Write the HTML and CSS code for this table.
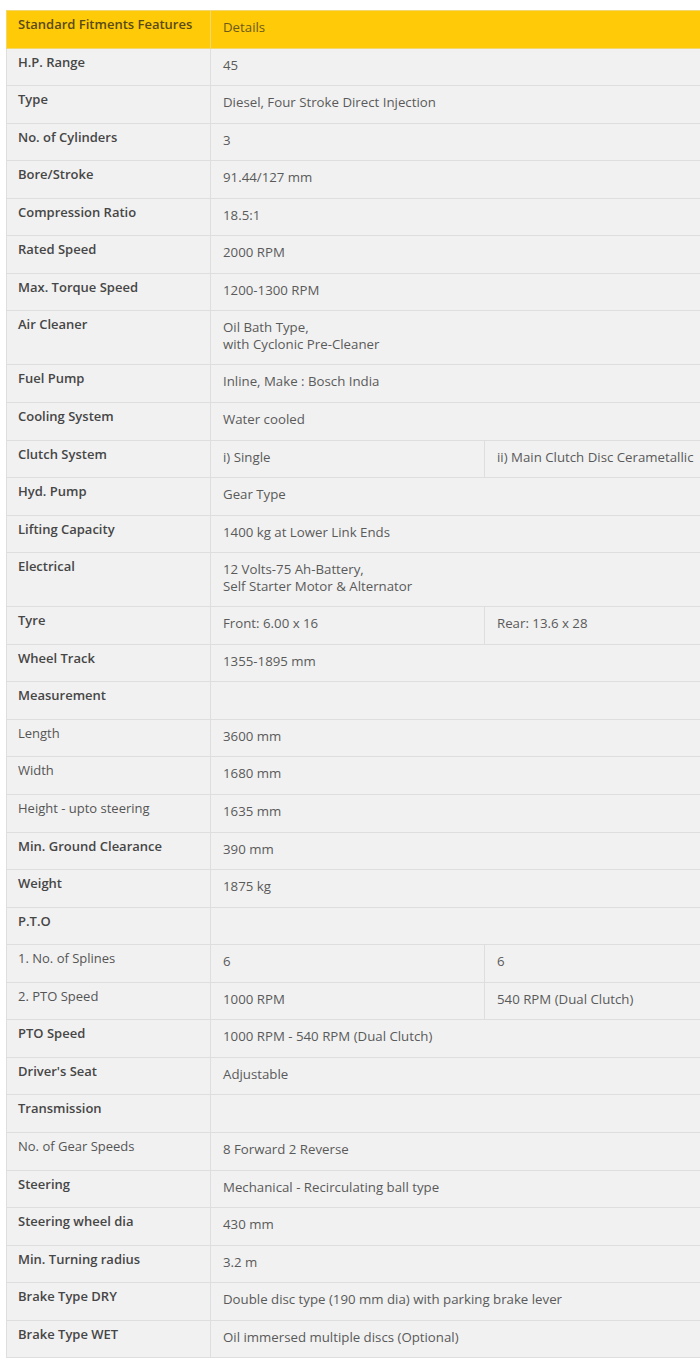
FILE: index.html
```html
<!DOCTYPE html>
<html lang="en">
<head>
  <meta charset="UTF-8" />
  <meta name="viewport" content="width=device-width, initial-scale=1" />
  <title>Specifications</title>
  <link rel="stylesheet" href="styles.css">
</head>
<body>
  <div class="spec-wrap">
    <table class="spec">
      <colgroup>
        <col class="c-label"><col class="c-val"><col class="c-extra">
      </colgroup>
      <thead>
        <tr><th>Standard Fitments Features</th><td colspan="2">Details</td></tr>
      </thead>
      <tbody>
        <tr><th>H.P. Range</th><td colspan="2">45</td></tr>
        <tr><th>Type</th><td colspan="2">Diesel, Four Stroke Direct Injection</td></tr>
        <tr><th>No. of Cylinders</th><td colspan="2">3</td></tr>
        <tr><th>Bore/Stroke</th><td colspan="2">91.44/127 mm</td></tr>
        <tr><th>Compression Ratio</th><td colspan="2">18.5:1</td></tr>
        <tr><th>Rated Speed</th><td colspan="2">2000 RPM</td></tr>
        <tr><th>Max. Torque Speed</th><td colspan="2">1200-1300 RPM</td></tr>
        <tr><th>Air Cleaner</th><td colspan="2">Oil Bath Type,<br>with Cyclonic Pre-Cleaner</td></tr>
        <tr><th>Fuel Pump</th><td colspan="2">Inline, Make : Bosch India</td></tr>
        <tr><th>Cooling System</th><td colspan="2">Water cooled</td></tr>
        <tr><th>Clutch System</th><td>i) Single</td><td>ii) Main Clutch Disc Cerametallic</td></tr>
        <tr><th>Hyd. Pump</th><td colspan="2">Gear Type</td></tr>
        <tr><th>Lifting Capacity</th><td colspan="2">1400 kg at Lower Link Ends</td></tr>
        <tr><th>Electrical</th><td colspan="2">12 Volts-75 Ah-Battery,<br>Self Starter Motor &amp; Alternator</td></tr>
        <tr><th>Tyre</th><td>Front: 6.00 x 16</td><td>Rear: 13.6 x 28</td></tr>
        <tr><th>Wheel Track</th><td colspan="2">1355-1895 mm</td></tr>
        <tr><th>Measurement</th><td colspan="2"></td></tr>
        <tr><th class="sub">Length</th><td colspan="2">3600 mm</td></tr>
        <tr><th class="sub">Width</th><td colspan="2">1680 mm</td></tr>
        <tr><th class="sub">Height - upto steering</th><td colspan="2">1635 mm</td></tr>
        <tr><th>Min. Ground Clearance</th><td colspan="2">390 mm</td></tr>
        <tr><th>Weight</th><td colspan="2">1875 kg</td></tr>
        <tr><th>P.T.O</th><td colspan="2"></td></tr>
        <tr><th class="sub">1. No. of Splines</th><td>6</td><td>6</td></tr>
        <tr><th class="sub">2. PTO Speed</th><td>1000 RPM</td><td>540 RPM (Dual Clutch)</td></tr>
        <tr><th>PTO Speed</th><td colspan="2">1000 RPM - 540 RPM (Dual Clutch)</td></tr>
        <tr><th>Driver's Seat</th><td colspan="2">Adjustable</td></tr>
        <tr><th>Transmission</th><td colspan="2"></td></tr>
        <tr><th class="sub">No. of Gear Speeds</th><td colspan="2">8 Forward 2 Reverse</td></tr>
        <tr><th>Steering</th><td colspan="2">Mechanical - Recirculating ball type</td></tr>
        <tr><th>Steering wheel dia</th><td colspan="2">430 mm</td></tr>
        <tr><th>Min. Turning radius</th><td colspan="2">3.2 m</td></tr>
        <tr><th>Brake Type DRY</th><td colspan="2">Double disc type (190 mm dia) with parking brake lever</td></tr>
        <tr><th>Brake Type WET</th><td colspan="2">Oil immersed multiple discs (Optional)</td></tr>
      </tbody>
    </table>
  </div>
</body>
</html>
```

FILE: styles.css
```css
html, body {
  margin: 0;
  padding: 0;
  background: #fff;
  font-family: 'Open Sans', 'Liberation Sans', sans-serif;
  font-size: 13px;
  overflow: hidden;
}

.spec-wrap {
  padding: 10px 0 0 6px;
  overflow: hidden;
}

.spec {
  width: 780px;
  table-layout: fixed;
  border-collapse: collapse;
  background: #f1f1f1;
  line-height: 16.55px;
}

.c-label { width: 204px; }
.c-val { width: 274px; }
.c-extra { width: 302px; }

.spec th,
.spec td {
  text-align: left;
  vertical-align: top;
  border: 1px solid #dedede;
  padding: 8px 12px 12px;
}

.spec th {
  font-weight: 600;
  color: #464646;
  padding: 5px 12px 15px 11px;
}

.spec th.sub {
  font-weight: 400;
  color: #555;
}

.spec td {
  color: #5a5a5a;
  font-size: 13.25px;
}

.spec thead th,
.spec thead td {
  background: #ffca08;
  border-color: #f2d66e;
  color: #6b5a1c;
}

.spec thead th {
  color: #5a4a16;
}
```
